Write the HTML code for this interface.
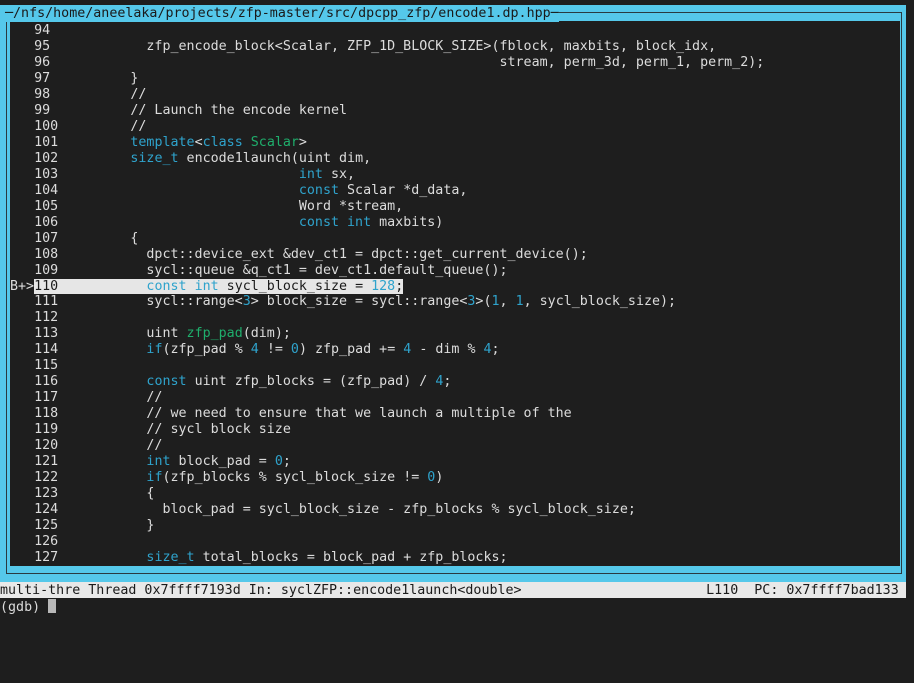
<!DOCTYPE html>
<html><head><style>
html,body{margin:0;padding:0;background:#1e1e1e;width:914px;height:683px;overflow:hidden}
*{font-family:"DejaVu Sans Mono","Liberation Mono",monospace;font-size:13.33px}
.cy{position:absolute;left:0;top:5px;width:906px;height:577px;background:#55c8ea}
.ln{position:absolute;left:6px;top:12px;width:894px;height:560px;border:1px solid #2a3a40}
.in{position:absolute;left:10px;top:21px;width:890px;height:545px;background:#1e1e1e}
.title{position:absolute;left:5px;top:6px;height:16px;line-height:16px;color:#1a1a1a;background:#55c8ea;white-space:pre}
pre{position:absolute;left:10px;top:23px;margin:0;line-height:15.97px;color:#dcdcdc;white-space:pre}
.k{color:#2fa3cc}.g{color:#1fae6c}
.hl{background:#e6e6e6;color:#1a1a1a}
.hl .k{color:#2fa3cc}
.st{position:absolute;left:0;top:582px;width:906px;height:16px;line-height:17px;background:#e8e8e8;color:#1a1a1a;white-space:pre}
.gdb{position:absolute;left:0;top:599px;line-height:16px;color:#dcdcdc;white-space:pre}
.cur{display:inline-block;width:8px;height:14px;background:#b8b8b8;vertical-align:-2px}
</style></head><body>
<div class="cy"></div><div class="ln"></div><div class="in"></div>
<div class="title">─/nfs/home/aneelaka/projects/zfp-master/src/dpcpp_zfp/encode1.dp.hpp─</div>
<pre>   94
   95            zfp_encode_block&lt;Scalar, ZFP_1D_BLOCK_SIZE&gt;(fblock, maxbits, block_idx,
   96                                                        stream, perm_3d, perm_1, perm_2);
   97          }
   98          //
   99          // Launch the encode kernel
   100         //
   101         <span class="k">template</span>&lt;<span class="k">class</span> <span class="g">Scalar</span>&gt;
   102         <span class="k">size_t</span> encode1launch(uint dim,
   103                              <span class="k">int</span> sx,
   104                              <span class="k">const</span> Scalar *d_data,
   105                              Word *stream,
   106                              <span class="k">const</span> <span class="k">int</span> maxbits)
   107         {
   108           dpct::device_ext &amp;dev_ct1 = dpct::get_current_device();
   109           sycl::queue &amp;q_ct1 = dev_ct1.default_queue();
B+&gt;<span class="hl">110           <span class="k">const</span> <span class="k">int</span> sycl_block_size = <span class="k">128</span>;</span>
   111           sycl::range&lt;<span class="k">3</span>&gt; block_size = sycl::range&lt;<span class="k">3</span>&gt;(<span class="k">1</span>, <span class="k">1</span>, sycl_block_size);
   112
   113           uint <span class="g">zfp_pad</span>(dim);
   114           <span class="k">if</span>(zfp_pad % <span class="k">4</span> != <span class="k">0</span>) zfp_pad += <span class="k">4</span> - dim % <span class="k">4</span>;
   115
   116           <span class="k">const</span> uint zfp_blocks = (zfp_pad) / <span class="k">4</span>;
   117           //
   118           // we need to ensure that we launch a multiple of the
   119           // sycl block size
   120           //
   121           <span class="k">int</span> block_pad = <span class="k">0</span>;
   122           <span class="k">if</span>(zfp_blocks % sycl_block_size != <span class="k">0</span>)
   123           {
   124             block_pad = sycl_block_size - zfp_blocks % sycl_block_size;
   125           }
   126
   127           <span class="k">size_t</span> total_blocks = block_pad + zfp_blocks;</pre>
<div class="st">multi-thre Thread 0x7ffff7193d In: syclZFP::encode1launch&lt;double&gt;                       L110  PC: 0x7ffff7bad133</div>
<div class="gdb">(gdb) <span class="cur"></span></div>
</body></html>
